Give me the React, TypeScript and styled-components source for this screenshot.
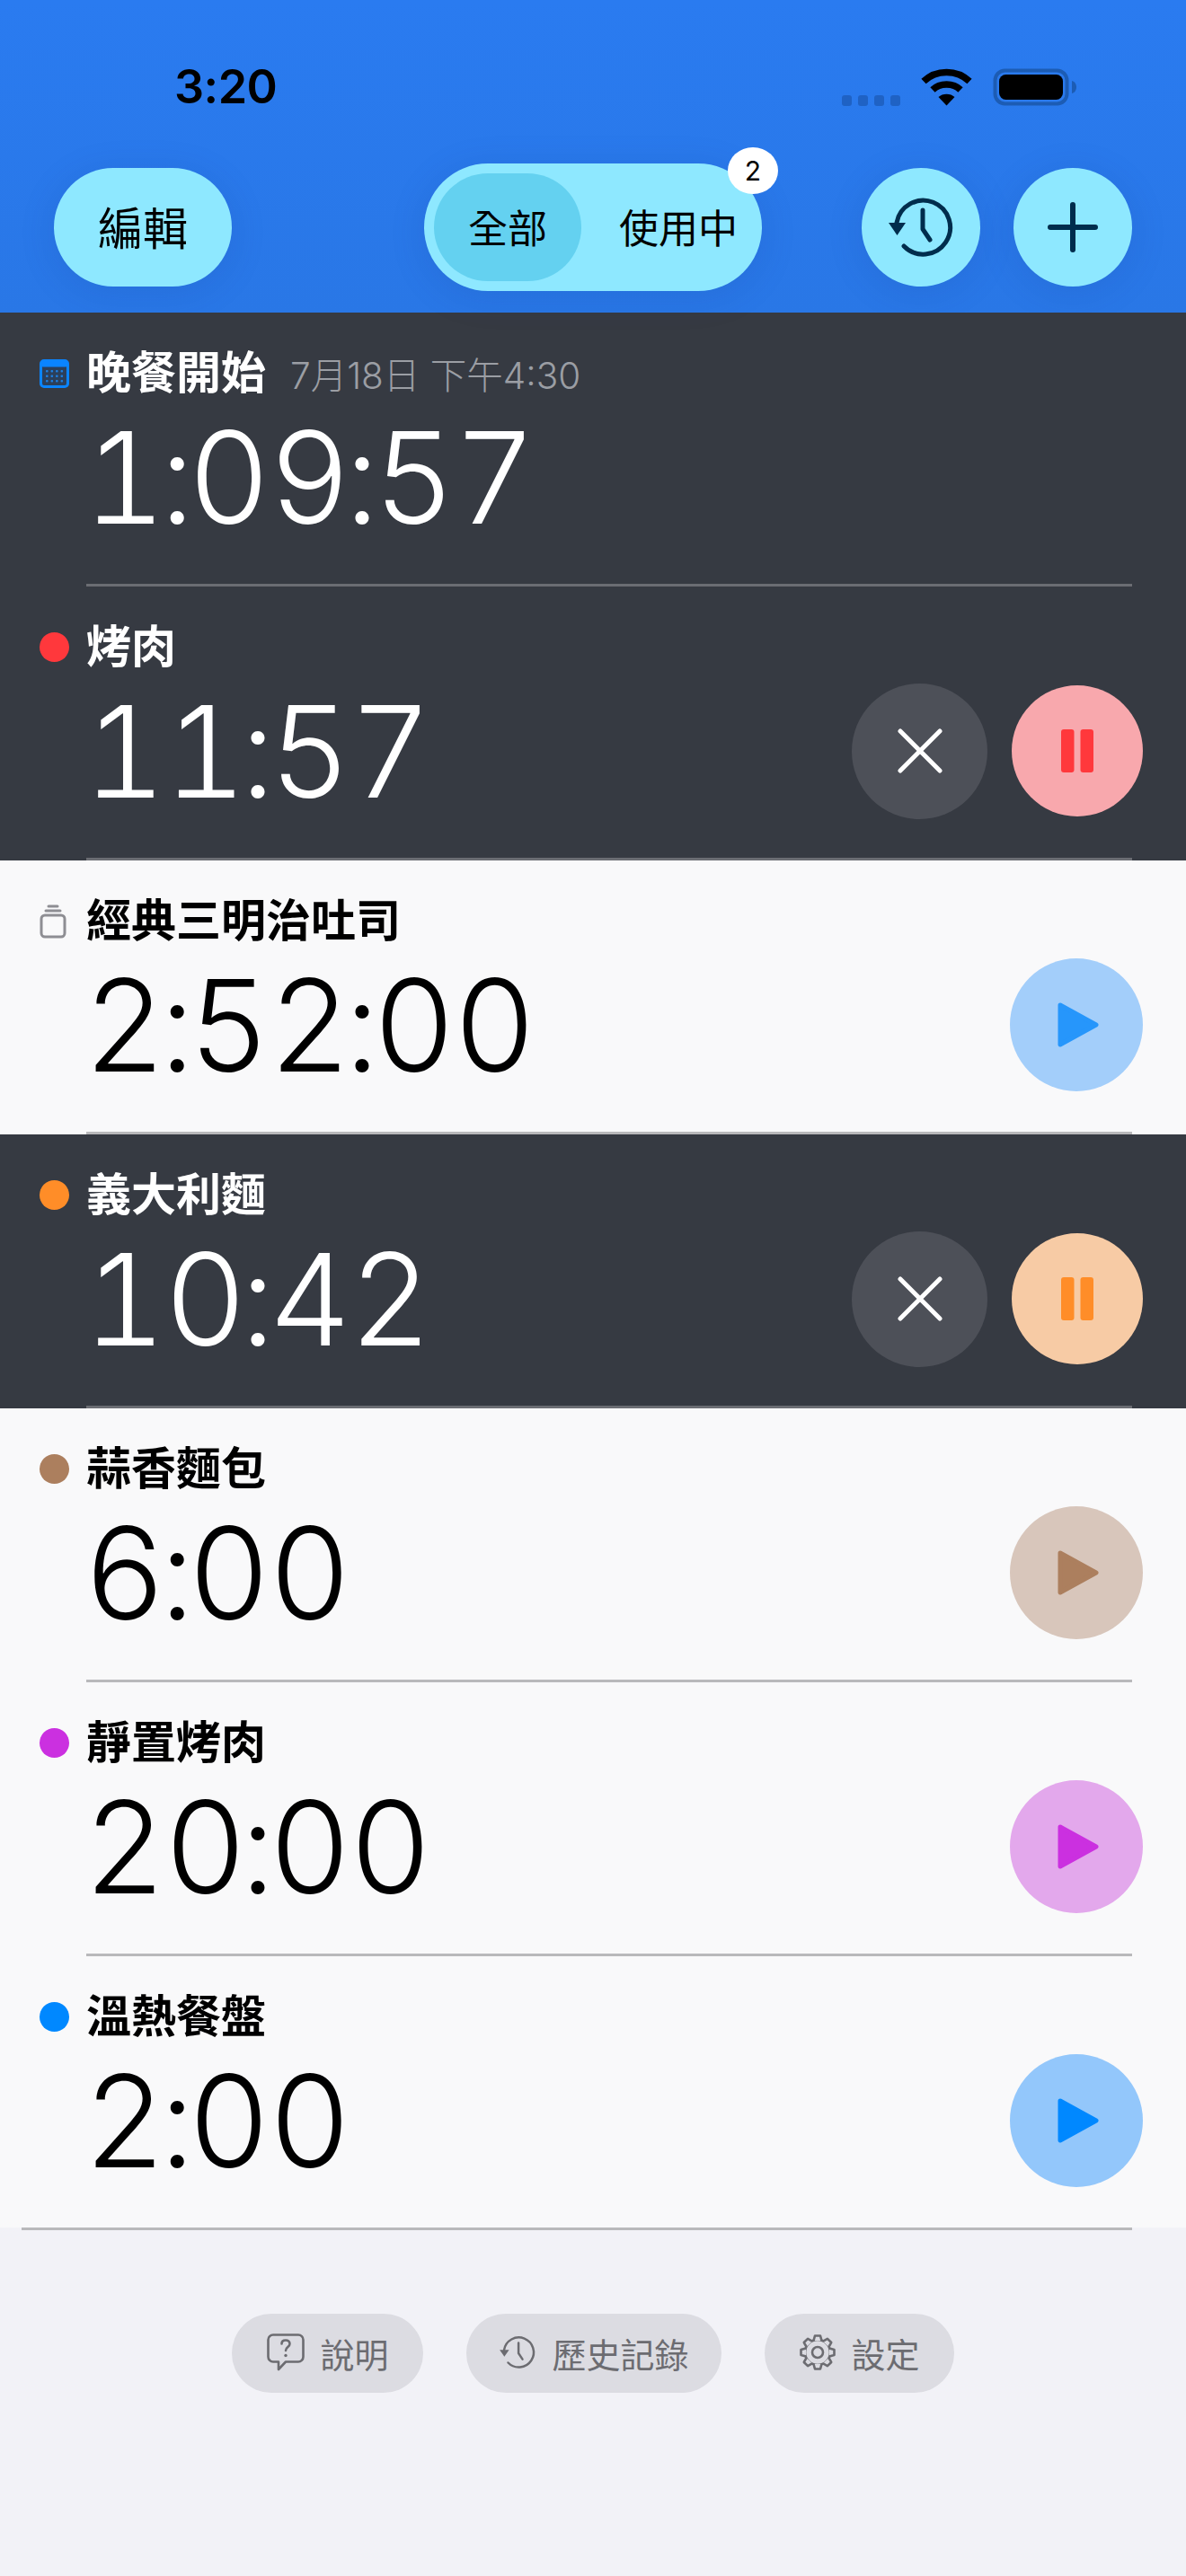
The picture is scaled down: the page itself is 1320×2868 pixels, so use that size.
import React from "react";
import styled, { createGlobalStyle } from "styled-components";

const FONT = `Inter, "Noto Sans CJK TC", "Noto Sans CJK SC", sans-serif`;

const Global = createGlobalStyle`
  html, body { margin: 0; padding: 0; background: #f2f2f7; }
  body { font-family: ${FONT}; }
  #root { width: 1320px; min-height: 2868px; background: #f2f2f7; }
  button { font-family: inherit; border: 0; padding: 0; cursor: pointer; }
`;

const Page = styled.div`
  width: 1320px;
  height: 2868px;
  overflow: hidden;
  display: flex;
  flex-direction: column;
`;

const Header = styled.header`
  height: 348px;
  flex: none;
  background: linear-gradient(#2a7bf0, #2977e6);
  display: flex;
  flex-direction: column;
`;

const StatusBar = styled.div`
  height: 44px;
  margin-top: 75px;
  padding: 0 122px 0 194px;
  display: flex;
  align-items: center;
  justify-content: space-between;
`;

const Clock = styled.div`
  font-size: 52px;
  font-weight: 600;
  line-height: 44px;
  letter-spacing: -0.5px;
  color: #000;
`;

const StatusIcons = styled.div`
  display: flex;
  align-items: flex-end;
  gap: 23px;
`;

const Toolbar = styled.div`
  margin-top: 63px;
  padding: 0 60px;
  display: flex;
  align-items: center;
`;

const EditButton = styled.button`
  width: 198px;
  height: 132px;
  padding-bottom: 4px;
  border-radius: 66px;
  background: #8ee8ff;
  color: #000;
  font-size: 50px;
  margin-right: 214px;
  box-shadow: 0 6px 40px rgba(20, 60, 140, 0.14);
`;

const Segment = styled.div`
  position: relative;
  width: 376px;
  height: 142px;
  border-radius: 71px;
  background: #8ee8ff;
  padding: 11px;
  box-sizing: border-box;
  display: flex;
  align-items: stretch;
  box-shadow: 0 6px 40px rgba(20, 60, 140, 0.14);
`;

const SegmentItem = styled.div<{ $active?: boolean }>`
  width: ${(p) => (p.$active ? "164px" : "190px")};
  padding: 0 0 3px ${(p) => (p.$active ? 0 : 26)}px;
  box-sizing: border-box;
  flex: none;
  border-radius: 60px;
  background: ${(p) => (p.$active ? "#64d1f0" : "transparent")};
  color: #000;
  font-size: 44px;
  white-space: nowrap;
  display: flex;
  align-items: center;
  justify-content: center;
`;

const Badge = styled.div`
  position: absolute;
  top: -18px;
  right: -18px;
  width: 56px;
  height: 52px;
  border-radius: 50%;
  background: #fff;
  color: #000;
  font-size: 30px;
  display: flex;
  align-items: center;
  justify-content: center;
`;

const RightGroup = styled.div`
  margin-left: auto;
  display: flex;
  gap: 37px;
`;

const RoundButton = styled.button`
  width: 132px;
  height: 132px;
  border-radius: 50%;
  background: #8ee8ff;
  display: flex;
  align-items: center;
  justify-content: center;
  box-shadow: 0 6px 40px rgba(20, 60, 140, 0.14);
`;

const List = styled.div`
  display: grid;
  grid-template-rows: repeat(6, 305px) 302px;
  flex: none;
`;

const Row = styled.div<{ $dark?: boolean }>`
  background: ${(p) => (p.$dark ? "#363a42" : "#f9f9fa")};
  color: ${(p) => (p.$dark ? "#fff" : "#000")};
  display: flex;
  flex-direction: column;
`;

const RowBody = styled.div`
  flex: 1;
  padding: 40px 48px 0 44px;
  display: grid;
  grid-template-columns: 52px 1fr auto;
  grid-template-rows: 55px 176px;
  align-items: center;
`;

const Dot = styled.span<{ $color: string }>`
  width: 33px;
  height: 33px;
  border-radius: 50%;
  background: ${(p) => p.$color};
`;

const TitleLine = styled.div`
  grid-column: 2 / 4;
  display: flex;
  align-items: baseline;
  gap: 27px;
  white-space: nowrap;
`;

const Title = styled.span`
  font-size: 50px;
  font-weight: 600;
  line-height: 55px;
`;

const DateText = styled.span`
  font-size: 40.5px;
  font-weight: 300;
  color: #9b9ea4;
`;

const Timer = styled.div`
  grid-column: 1 / 3;
  padding-left: 49px;
  font-size: 142px;
  font-weight: 300;
  font-variant-numeric: tabular-nums;
  line-height: 176px;
  letter-spacing: -2px;
  white-space: nowrap;
`;

const Colon = styled.span`
  margin: 0 -5px;
`;

const Controls = styled.div`
  display: flex;
  align-items: center;
  gap: 27px;
`;

const ActionButton = styled.button<{ $bg: string; $size: number }>`
  width: ${(p) => p.$size}px;
  height: ${(p) => p.$size}px;
  border-radius: 50%;
  background: ${(p) => p.$bg};
  display: flex;
  align-items: center;
  justify-content: center;
`;

const Separator = styled.div<{ $dark?: boolean; $left?: number }>`
  height: 3px;
  flex: none;
  margin: 0 60px 0 ${(p) => p.$left ?? 96}px;
  background: ${(p) => (p.$dark ? "#6b6d73" : "#b9b9bb")};
`;

const Footer = styled.footer`
  margin-top: 93px;
  display: flex;
  justify-content: center;
  gap: 48px;
`;

const FootButton = styled.button<{ $pad: number }>`
  height: 88px;
  padding: 0 ${(p) => p.$pad}px 2px;
  border-radius: 44px;
  background: #dcdce2;
  color: #6c6c71;
  font-size: 38px;
  display: flex;
  align-items: center;
  gap: 17px;
`;

const CalendarIcon = () => (
  <svg width="33" height="32" viewBox="0 0 33 32">
    <rect x="1.5" y="1.5" width="30" height="29" rx="3.5" fill="#2b3f5a" stroke="#0a84ff" strokeWidth="3" />
    <rect x="1.5" y="1.5" width="30" height="7" rx="2.5" fill="#0a84ff" />
    {[0, 1, 2, 3].map((c) =>
      [0, 1, 2].map((r) => (
        <rect key={`${c}-${r}`} x={7 + c * 5.5} y={12 + r * 5.5} width="2.6" height="2.6" rx="1" fill="#1f7fe0" />
      ))
    )}
  </svg>
);

const JarIcon = () => (
  <svg width="30" height="38" viewBox="0 0 30 38" fill="none" stroke="#8e8e93" strokeWidth="3" strokeLinecap="round">
    <path d="M10 2h10" />
    <path d="M7 7h16" />
    <rect x="2" y="12" width="26" height="24" rx="4" />
  </svg>
);

const HistoryIcon = ({ size, color, sw }: { size: number; color: string; sw: number }) => (
  <svg width={size} height={(size * 72) / 76} viewBox="0 0 76 72" fill="none" stroke={color} strokeWidth={sw} strokeLinecap="round" strokeLinejoin="round">
    <path d="M11 31 A30 30 0 1 1 19 57" />
    <path d="M40 17 V38 L48 50" />
    <path d="M2 31 H21 L11.5 45 Z" fill={color} stroke="none" />
  </svg>
);

const PlusIcon = () => (
  <svg width="56" height="56" viewBox="0 0 56 56" stroke="#002d4d" strokeWidth="6" strokeLinecap="round">
    <path d="M28 3 V53 M3 28 H53" />
  </svg>
);

const CloseIcon = () => (
  <svg width="50" height="50" viewBox="0 0 50 50" stroke="#fff" strokeWidth="5" strokeLinecap="round">
    <path d="M3 3 L47 47 M47 3 L3 47" />
  </svg>
);

const PauseIcon = ({ color }: { color: string }) => (
  <svg width="36" height="48" viewBox="0 0 36 48" fill={color}>
    <rect x="0" y="0" width="14.5" height="48" rx="3" />
    <rect x="21.5" y="0" width="14.5" height="48" rx="3" />
  </svg>
);

const PlayIcon = ({ color }: { color: string }) => (
  <svg width="46" height="52" viewBox="0 0 46 52" fill={color} stroke={color} strokeWidth="5" strokeLinejoin="round" style={{ marginLeft: 4 }}>
    <path d="M3 4 L43 26 L3 48 Z" />
  </svg>
);

const QuestionIcon = () => (
  <svg width="42" height="42" viewBox="0 0 42 42" fill="none" stroke="#6c6c71" strokeWidth="2.6" strokeLinejoin="round">
    <path d="M7 1.5 H35 A5.5 5.5 0 0 1 40.5 7 V26 A5.5 5.5 0 0 1 35 31.5 H21 L13 40 V31.5 H7 A5.5 5.5 0 0 1 1.5 26 V7 A5.5 5.5 0 0 1 7 1.5 Z" />
    <path d="M16.5 11.5 C16.5 8.5 19 7.5 21 7.5 C23.5 7.5 25.5 9 25.5 11.5 C25.5 15 21 15 21 19" strokeLinecap="round" />
    <circle cx="21" cy="24.5" r="1.7" fill="#6c6c71" stroke="none" />
  </svg>
);

const GearIcon = () => {
  const teeth = Array.from({ length: 8 }, (_, i) => i * 45);
  return (
    <svg width="42" height="42" viewBox="0 0 42 42" fill="none" stroke="#6c6c71" strokeWidth="2.6" strokeLinejoin="round">
      <circle cx="21" cy="21" r="6" />
      <circle cx="21" cy="21" r="14" />
      {teeth.map((a) => (
        <path key={a} d="M16.5 8 L18 2.5 H24 L25.5 8" transform={`rotate(${a} 21 21)`} fill="#dcdce2" />
      ))}
    </svg>
  );
};

const SignalDots = () => (
  <svg width="65" height="12" viewBox="0 0 65 12" fill="#1f62c4">
    {[0, 18, 36, 54].map((x) => (
      <rect key={x} x={x} y="0" width="11" height="12" rx="3" />
    ))}
  </svg>
);

const WifiIcon = () => (
  <svg width="57" height="42" viewBox="0 0 57 42" fill="none" stroke="#000" strokeWidth="7.5">
    <path d="M3 14.5 C17 1 40 1 54 14.5" />
    <path d="M13 24 C21 16 36 16 44 24" />
    <path d="M28.5 41.5 L19.5 32 C24 27.5 33 27.5 37.5 32 Z" fill="#000" stroke="none" />
  </svg>
);

const BatteryIcon = () => (
  <svg width="93" height="42" viewBox="0 0 93 42">
    <rect x="2.5" y="2.5" width="80" height="37" rx="11" fill="none" stroke="#1c5cb4" strokeWidth="4" />
    <rect x="7" y="7" width="71" height="28" rx="7.5" fill="#000" />
    <path d="M88 14 C91.5 15 93 18 93 21 C93 24 91.5 27 88 28 Z" fill="#1c5cb4" />
  </svg>
);

type Item = {
  title: string;
  time: string;
  dark?: boolean;
  color?: string;
  bg?: string;
  state?: "run" | "idle";
  icon?: React.ReactNode;
  date?: string;
};

const items: Item[] = [
  { title: "晚餐開始", date: "7月18日 下午4:30", time: "1:09:57", dark: true, icon: <CalendarIcon /> },
  { title: "烤肉", time: "11:57", dark: true, color: "#ff383c", bg: "#f8a8ad", state: "run" },
  { title: "經典三明治吐司", time: "2:52:00", color: "#2696fb", bg: "#a3cefa", state: "idle", icon: <JarIcon /> },
  { title: "義大利麵", time: "10:42", dark: true, color: "#ff8d28", bg: "#f7cba5", state: "run" },
  { title: "蒜香麵包", time: "6:00", color: "#ac7f5e", bg: "#d8c6bb", state: "idle" },
  { title: "靜置烤肉", time: "20:00", color: "#cb30e0", bg: "#e3a8ec", state: "idle" },
  { title: "溫熱餐盤", time: "2:00", color: "#0088ff", bg: "#93c7fb", state: "idle" },
];

const renderTime = (time: string) =>
  time.split(":").map((part, i) => (
    <React.Fragment key={i}>
      {i > 0 && <Colon>:</Colon>}
      {part}
    </React.Fragment>
  ));

export default function App() {
  return (
    <Page>
      <Global />
      <Header>
        <StatusBar>
          <Clock>3:20</Clock>
          <StatusIcons>
            <SignalDots />
            <WifiIcon />
            <BatteryIcon />
          </StatusIcons>
        </StatusBar>
        <Toolbar>
          <EditButton>編輯</EditButton>
          <Segment>
            <SegmentItem $active>全部</SegmentItem>
            <SegmentItem>使用中</SegmentItem>
            <Badge>2</Badge>
          </Segment>
          <RightGroup>
            <RoundButton>
              <HistoryIcon size={76} color="#002d4d" sw={5} />
            </RoundButton>
            <RoundButton>
              <PlusIcon />
            </RoundButton>
          </RightGroup>
        </Toolbar>
      </Header>
      <List>
        {items.map((it, i) => (
          <Row key={it.title} $dark={it.dark}>
            <RowBody>
              {it.icon ?? <Dot $color={it.color as string} />}
              <TitleLine>
                <Title>{it.title}</Title>
                {it.date && <DateText>{it.date}</DateText>}
              </TitleLine>
              <Timer>{renderTime(it.time)}</Timer>
              {it.state && (
                <Controls>
                  {it.state === "run" && (
                    <ActionButton $bg="#4d5058" $size={151}>
                      <CloseIcon />
                    </ActionButton>
                  )}
                  <ActionButton $bg={it.bg as string} $size={it.state === "run" ? 146 : 148}>
                    {it.state === "run" ? <PauseIcon color={it.color as string} /> : <PlayIcon color={it.color as string} />}
                  </ActionButton>
                </Controls>
              )}
            </RowBody>
            {i < items.length - 1 && <Separator $dark={it.dark} />}
          </Row>
        ))}
      </List>
      <Separator $left={24} />
      <Footer>
        <FootButton $pad={39}>
          <QuestionIcon />
          說明
        </FootButton>
        <FootButton $pad={36}>
          <HistoryIcon size={42} color="#6c6c71" sw={4.5} />
          歷史記錄
        </FootButton>
        <FootButton $pad={38}>
          <GearIcon />
          設定
        </FootButton>
      </Footer>
    </Page>
  );
}
